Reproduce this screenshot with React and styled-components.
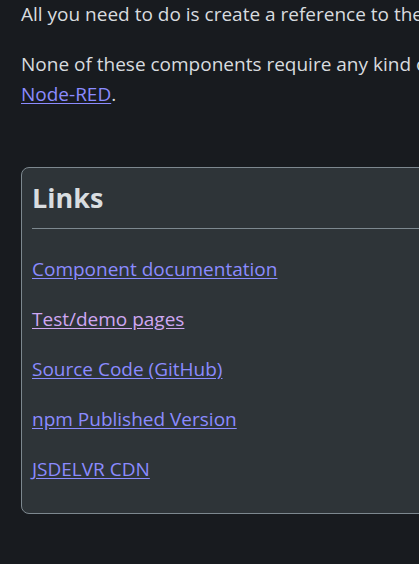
import React from "react";
import styled, { createGlobalStyle } from "styled-components";

const Global = createGlobalStyle`
  html, body { margin: 0; padding: 0; background: #181b1f; }
  body { font-family: "Open Sans", "Noto Sans", sans-serif; color: #d8dcdf; overflow: hidden; }
`;

const Page = styled.main`
  padding: 0 0 0 21px;
  margin-top: -1px;
  width: 560px;
  font-size: 19px;
  line-height: 30px;
`;

const Para = styled.p`
  margin: 0 0 20px;
  white-space: nowrap;
`;

const Link = styled.a`
  color: ${(p) => (p.$visited ? "#cfa7f2" : "#8b8bff")};
  text-decoration: underline;
  text-underline-offset: 2px;
`;

const Card = styled.section`
  margin-top: 58px;
  background: #2e3438;
  border: 1px solid #7d888f;
  border-radius: 8px;
  padding: 10px 10px 9px;
`;

const Heading = styled.h2`
  margin: 0;
  font-size: 27px;
  font-weight: 700;
  line-height: 40px;
  color: #d9dde0;
  padding-bottom: 10px;
  border-bottom: 1px solid #7d888f;
  margin-bottom: 25px;
`;

const LinkList = styled.div`
  display: flex;
  flex-direction: column;
`;

const links = [
  ["Component documentation", false],
  ["Test/demo pages", true],
  ["Source Code (GitHub)", false],
  ["npm Published Version", false],
  ["JSDELVR CDN", false],
];

export default function App() {
  return (
    <>
      <Global />
      <Page>
        <Para>All you need to do is create a reference to the library.</Para>
        <Para>
          None of these components require any kind of build step
          <br />
          <Link href="#">Node-RED</Link>.
        </Para>
        <Card>
          <Heading>Links</Heading>
          <LinkList>
            {links.map(([t, v]) => (
              <Para key={t}>
                <Link href="#" $visited={v}>{t}</Link>
              </Para>
            ))}
          </LinkList>
        </Card>
      </Page>
    </>
  );
}
